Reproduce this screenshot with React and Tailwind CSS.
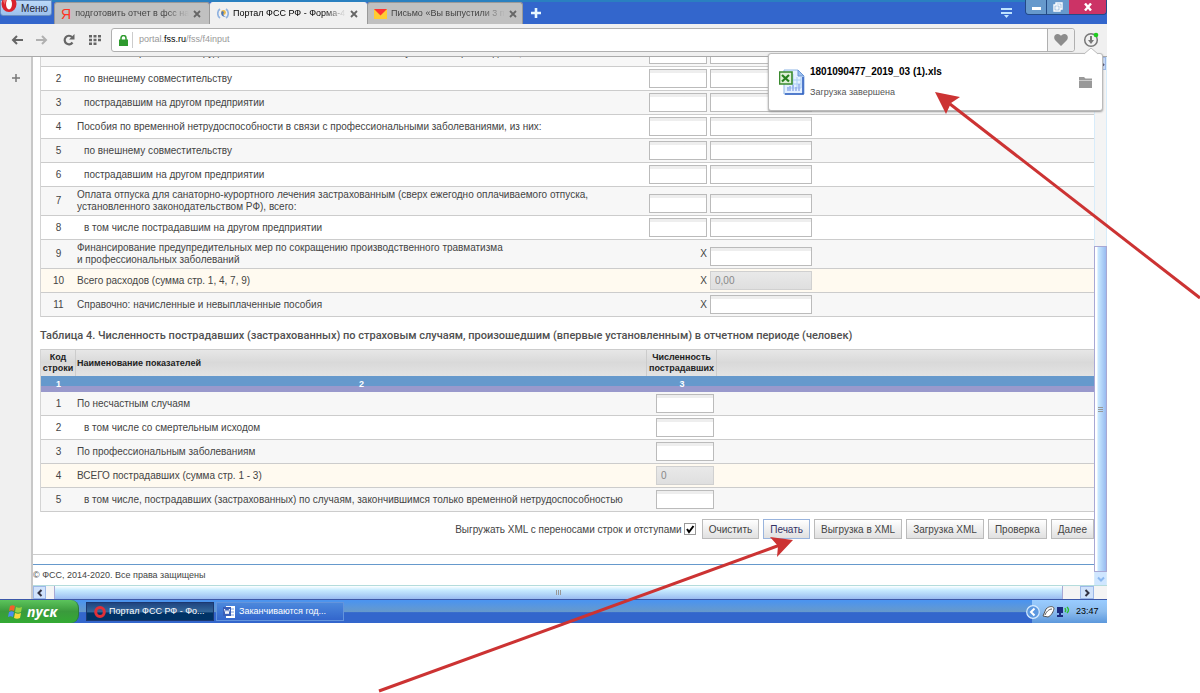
import { useState } from "react";

const paymentRows = [
  { code: "1", text: "Пособия по временной нетрудоспособности в связи с несчастными случаями на производстве, из них:", tall: true, days: true },
  { code: "2", text: "по внешнему совместительству", indent: true, days: true },
  { code: "3", text: "пострадавшим на другом предприятии", indent: true, days: true },
  { code: "4", text: "Пособия по временной нетрудоспособности в связи с профессиональными заболеваниями, из них:", days: true },
  { code: "5", text: "по внешнему совместительству", indent: true, days: true },
  { code: "6", text: "пострадавшим на другом предприятии", indent: true, days: true },
  { code: "7", text: "Оплата отпуска для санаторно-курортного лечения застрахованным (сверх ежегодно оплачиваемого отпуска,", second: "установленного законодательством РФ), всего:", tall: true, days: true },
  { code: "8", text: "в том числе пострадавшим на другом предприятии", indent: true, days: true },
  { code: "9", text: "Финансирование предупредительных мер по сокращению производственного травматизма", second: "и профессиональных заболеваний", tall: true },
  { code: "10", text: "Всего расходов (сумма стр. 1, 4, 7, 9)", total: "0,00" },
  { code: "11", text: "Справочно: начисленные и невыплаченные пособия" },
];

const injuredRows = [
  { code: "1", text: "По несчастным случаям" },
  { code: "2", text: "в том числе со смертельным исходом", indent: true },
  { code: "3", text: "По профессиональным заболеваниям" },
  { code: "4", text: "ВСЕГО пострадавших (сумма стр. 1 - 3)", total: "0" },
  { code: "5", text: "в том числе, пострадавших (застрахованных) по случаям, закончившимся только временной нетрудоспособностью", indent: true },
];

const actions = ["Очистить", "Печать", "Выгрузка в XML", "Загрузка XML", "Проверка", "Далее"];

function rowColor(row) {
  if (row.total) return "bg-[#fffaf0]";
  return Number(row.code) % 2 ? "bg-[#f7f7f7]" : "bg-white";
}

function Field({ label, total, wide }) {
  return (
    <input
      aria-label={label}
      defaultValue={total || ""}
      disabled={Boolean(total)}
      className={`block h-[19px] border px-1 text-[10px] ${wide ? "w-[102px]" : "w-[58px]"} ${
        total
          ? "border-[#d0d0d0] bg-linear-to-b from-[#e9e9e9] to-[#dfdfdf] text-[#888]"
          : "border-[#bbb] bg-linear-to-b from-[#eee] from-15% to-white to-20%"
      }`}
    />
  );
}

function OperaLogo({ className }) {
  return (
    <svg viewBox="0 0 16 16" className={className}>
      <ellipse cx="8" cy="8" rx="7.5" ry="8" fill="#d9232e" />
      <path d="M2 5C4 1 9 0 12 2L9 3C5 3 4 6 4 9Z" fill="#ef6a6a" />
      <ellipse cx="8" cy="8" rx="3" ry="5.4" fill="#fff" />
    </svg>
  );
}

function Tab({ icon, title, active }) {
  return (
    <div
      className={`flex h-[22px] items-center gap-1 rounded-t-[3px] border border-b-0 pr-2 pl-1.5 ${
        active ? "w-[157px] border-[#f0f0f0] bg-[#f0f0f0] text-black" : "w-[156px] border-[#999] bg-[#c0c0c0] text-[#444]"
      }`}
    >
      {icon}
      <button className="mask-r-from-80% flex-1 text-left text-[9px] whitespace-nowrap">
        {title}
      </button>
      <button aria-label="Закрыть вкладку">
        <svg viewBox="0 0 8 8" className="size-2" stroke="#666" strokeWidth="1.8">
          <path d="M1 1L7 7M7 1L1 7" />
        </svg>
      </button>
    </div>
  );
}

function TitleBar() {
  return (
    <header className="flex h-6 items-start border-t-2 border-[#2a80c0] bg-[#3366cc]">
      <button className="-mt-0.5 mr-0.5 flex h-[16px] w-[52px] items-center gap-1 rounded-b-[3px] border border-[#6a8fc0] bg-linear-to-b from-[#bcd8f8] to-[#9cc0ec] text-[#223]">
        <OperaLogo className="-mt-2 h-5 w-4 shrink-0" />
        Меню
      </button>
      <Tab
        title="подготовить отчет в фсс на"
        icon={<span className="w-3 text-center text-[14px] leading-4 text-[#f32]">Я</span>}
      />
      <Tab
        active
        title="Портал ФСС РФ - Форма-4"
        icon={
          <svg viewBox="0 0 12 12" className="size-3 shrink-0" fill="none">
            <path d="M3 1C0 3 0 8 3 10M9 1C12 3 12 8 9 10" stroke="#8fb2e0" strokeWidth="1.6" />
            <circle cx="6.5" cy="4.5" r="2.4" fill="#e8b84a" />
            <path d="M5 3C3 6 5 9 9 9C6 8 6 6 7 4Z" fill="#4a76b8" />
          </svg>
        }
      />
      <Tab
        title="Письмо «Вы выпустили 3 п"
        icon={
          <svg viewBox="0 0 13 10" className="h-2.5 w-[13px] shrink-0">
            <path d="M0 0H13V10H0Z" fill="#fc3" />
            <path d="M0 0H13L6.500 6.500Z" fill="#f33" />
          </svg>
        }
      />
      <button aria-label="Новая вкладка" className="ml-2 mt-1.5">
        <svg viewBox="0 0 10 10" className="size-2.5" stroke="#e8f8ff" strokeWidth="2.6">
          <path d="M5 0V10M0 5H10" />
        </svg>
      </button>
      <button aria-label="Меню вкладок" className="mt-1.5 mr-[13px] ml-auto">
        <svg viewBox="0 0 11 10" className="h-2.5 w-[11px]" fill="#bfe4ff">
          <path d="M0 0H11V2H0ZM0 4H11V6H0ZM3 7H8L5.500 10Z" />
        </svg>
      </button>
      <div className="-mt-0.5 flex h-[15px] overflow-hidden rounded-b-[4px] border border-t-0 border-[#234a86]">
        <button aria-label="Свернуть" className="flex w-[21px] items-end justify-center border-r border-[#234a86] bg-[#6699cc] pb-1">
          <span className="h-[3px] w-[9px] bg-white" />
        </button>
        <button aria-label="Развернуть" className="flex w-[22px] items-center justify-center bg-[#6699cc]">
          <svg viewBox="0 0 10 10" className="size-2.5" fill="none" stroke="#fff" strokeWidth="1.4">
            <path d="M3 3V1H9V7H7M1 3H7V9H1ZM3 5H5V7H3Z" />
          </svg>
        </button>
        <button aria-label="Закрыть" className="flex w-[37px] items-center justify-center bg-[#cc3366]">
          <svg viewBox="0 0 8 8" className="size-2" stroke="#fff" strokeWidth="2.4">
            <path d="M1 0.500L7 7.500M7 0.500L1 7.500" />
          </svg>
        </button>
      </div>
    </header>
  );
}

function DownloadPopup() {
  return (
    <div className="absolute top-[29px] right-1 z-10 flex h-[58px] w-[335px] items-center rounded-[3px] border border-[#bbb] bg-white pr-2.5 pl-2.5 shadow-[0_1px_2px_#999]">
      <svg viewBox="0 0 14 7" className="absolute -top-1.5 right-1 h-[7px] w-3.5">
        <path d="M0 6L7 0L14 6" fill="#fff" stroke="#bbb" />
        <path d="M1 7L7 1L13 7Z" fill="#fff" />
      </svg>
      <svg viewBox="0 0 26 26" className="size-[26px]">
        <path d="M5 1H19L25 7V25H5Z" fill="#e4f0ff" stroke="#8fb4e4" />
        <path d="M24 8V25H6" fill="none" stroke="#2f5fc0" strokeWidth="1.6" />
        <path d="M19 1V7H25Z" fill="#9cc0f0" stroke="#6a94d4" />
        <path d="M14 5V19M18 8V19M8 15H22M8 11H22M8 19H22M22 8V19" stroke="#a9cdf5" />
        <path d="M9 22V18M11 22V17M14 22V16M17 22V18M20 22V15" stroke="#8fa8e8" strokeWidth="1.4" />
        <path d="M0.500 3H13V15H0.500Z" fill="#dff0d8" stroke="#3a8a2e" strokeWidth="1.6" />
        <path d="M3 6L10 12.500M10 6L3 12.500" stroke="#26801e" strokeWidth="2.2" />
      </svg>
      <div className="ml-[5px] flex-1">
        <p className="leading-4 font-bold text-black">1801090477_2019_03 (1).xls</p>
        <p className="mt-1 text-[9px] leading-4 text-[#555]">Загрузка завершена</p>
      </div>
      <button aria-label="Показать в папке">
        <svg viewBox="0 0 13 11" className="h-[11px] w-[13px]" fill="#999">
          <path d="M0 0H5L6.500 1.500H13V3H0ZM0 3.500H13V11H0Z" />
        </svg>
      </button>
    </div>
  );
}

function Toolbar() {
  return (
    <nav className="relative flex h-[33px] items-center border-b border-[#aaa] bg-[#f0f0f0] pl-[11px]">
      <button aria-label="Назад">
        <svg viewBox="0 0 12 10" className="h-2.5 w-3" fill="none" stroke="#666" strokeWidth="2">
          <path d="M12 5H2M6 1L2 5L6 9" />
        </svg>
      </button>
      <button aria-label="Вперёд" className="ml-[13px]">
        <svg viewBox="0 0 12 10" className="h-2.5 w-3" fill="none" stroke="#b0b0b0" strokeWidth="2">
          <path d="M0 5H10M6 1L10 5L6 9" />
        </svg>
      </button>
      <button aria-label="Обновить" className="ml-[15px]">
        <svg viewBox="0 0 12 12" className="size-3" fill="none">
          <path d="M9.500 8.500A4.300 4.300 0 1 1 9 3" stroke="#666" strokeWidth="2.200" />
          <path d="M11.500 0V5.500H6Z" fill="#666" />
        </svg>
      </button>
      <button aria-label="Экспресс-панель" className="ml-3.5">
        <svg viewBox="0 0 12 10" className="h-2.5 w-3" fill="#666">
          <path d="M0 0H3V2.500H0ZM4.500 0H7.500V2.500H4.500ZM9 0H12V2.500H9ZM0 3.700H3V6.200H0ZM4.500 3.700H7.500V6.200H4.500ZM9 3.700H12V6.200H9ZM0 7.400H3V10H0ZM4.500 7.400H7.500V10H4.500Z" />
        </svg>
      </button>
      <div className="ml-2.5 flex h-6 flex-1 items-center rounded-[3px] border border-[#b0b0b0] bg-white pl-[7px]">
        <svg viewBox="0 0 9 11" className="h-[11px] w-[9px]">
          <path d="M2 5V3A2.500 2.500 0 0 1 7 3V5" fill="none" stroke="#2e9a2e" strokeWidth="1.500" />
          <path d="M0 4.500H9V11H0Z" fill="#2e9a2e" />
        </svg>
        <span className="ml-1 h-4 w-px bg-[#ccc]" />
        <div role="textbox" aria-label="Адрес" className="ml-1.5 flex-1 text-[9px] text-[#999]">
          portal.<span className="text-black">fss.ru</span>/fss/f4input
        </div>
        <button aria-label="В закладки" className="flex h-full w-[27px] items-center justify-center rounded-r-[3px] border-l border-[#b0b0b0] bg-[#f0f0f0]">
          <svg viewBox="0 0 14 12" className="h-3 w-3.5" fill="#8c8c8c">
            <path d="M7 12L1 6C-1 3 1 0 3.500 0C5.500 0 6.500 1 7 2C7.500 1 8.500 0 10.500 0C13 0 15 3 13 6Z" />
          </svg>
        </button>
      </div>
      <button aria-label="Загрузки" className="mr-2 ml-2">
        <svg viewBox="0 0 16 16" className="size-4" fill="none">
          <circle cx="8" cy="8" r="6.300" stroke="#777" strokeWidth="1.500" />
          <path d="M8 4V9" stroke="#777" strokeWidth="2" />
          <path d="M5 8H11L8 12Z" fill="#777" />
          <circle cx="13" cy="3" r="2.300" fill="#1fcc1f" />
        </svg>
      </button>
      <DownloadPopup />
    </nav>
  );
}

function PaymentsTable() {
  return (
    <table className="-mt-[19px] w-full table-fixed border-separate border-spacing-0 border-l border-[#d4d4d4] leading-3">
      <colgroup>
        <col className="w-[35px]" />
        <col className="w-[571px]" />
        <col className="w-[62px]" />
        <col />
      </colgroup>
      <tbody>
        {paymentRows.map((row) => (
          <tr key={row.code} className={`${row.tall ? "h-[29px]" : "h-6"} ${rowColor(row)}`}>
            <td className="border-b border-[#ccc] p-0 text-center">{row.code}</td>
            <td
              className={`border-b border-[#ccc] p-0 whitespace-nowrap ${row.indent ? "pl-2" : "pl-px"} ${
                row.tall && !row.second ? "pt-0.5" : ""
              }`}
            >
              {row.text}
              {row.second && <br />}
              {row.second}
            </td>
            {row.days ? (
              <td className="border-b border-[#ccc] p-0 pb-0.5 pl-0.5 align-bottom">
                <Field label={`Строка ${row.code}, дни`} />
              </td>
            ) : (
              <td className="border-b border-[#ccc] p-0 pr-0.5 text-right">X</td>
            )}
            <td className="border-b border-[#ccc] p-0 pb-0.5 pl-px align-bottom">
              <Field wide label={`Строка ${row.code}, сумма`} total={row.total} />
            </td>
          </tr>
        ))}
      </tbody>
    </table>
  );
}

function InjuredTable() {
  return (
    <table className="w-full table-fixed border-separate border-spacing-0 border-l border-[#d4d4d4] leading-3">
      <colgroup>
        <col className="w-[35px]" />
        <col className="w-[571px]" />
        <col className="w-[70px]" />
        <col />
      </colgroup>
      <thead className="text-[9px] font-bold">
        <tr className="h-[27px] bg-linear-to-b from-[#e8e8e8] via-[#d9d9d9] to-[#e3e3e3] leading-[11px] text-[#222]">
          <th className="border-t border-r border-[#ccc] p-0">
            Код
            <br />
            строки
          </th>
          <th className="border-t border-r border-[#ccc] p-0 pl-px text-left">Наименование показателей</th>
          <th className="border-t border-r border-[#ccc] p-0">
            Численность
            <br />
            пострадавших
          </th>
          <th className="border-t border-[#ccc] p-0" />
        </tr>
        <tr className="h-4 bg-linear-to-b from-[#6699cc] from-65% to-[#9999cc] to-65% text-white">
          <th className="p-0">1</th>
          <th className="p-0">2</th>
          <th className="p-0">3</th>
          <th className="p-0" />
        </tr>
      </thead>
      <tbody>
        {injuredRows.map((row) => (
          <tr key={row.code} className={`h-6 ${rowColor(row)}`}>
            <td className="border-b border-[#ccc] p-0 text-center">{row.code}</td>
            <td className={`border-b border-[#ccc] p-0 whitespace-nowrap ${row.indent ? "pl-2" : "pl-px"}`}>{row.text}</td>
            <td className="border-b border-[#ccc] p-0 pb-0.5 pl-[9px] align-bottom">
              <Field label={`Численность, строка ${row.code}`} total={row.total} />
            </td>
            <td className="border-b border-[#ccc] p-0" />
          </tr>
        ))}
      </tbody>
    </table>
  );
}

function Chevron({ className, color }) {
  return (
    <svg viewBox="0 0 8 8" className={`size-2 ${className || ""}`} fill="none" stroke={color} strokeWidth="2">
      <path d="M5.500 1L2.500 4L5.500 7" />
    </svg>
  );
}

function VerticalScrollbar() {
  return (
    <div className="flex w-[13px] shrink-0 flex-col border-x border-[#d8ecfa] bg-[#f4f4f4]">
      <button aria-label="Вверх" className="flex h-[13px] items-center justify-center border border-[#9cb8e8] bg-[#c8dcfa]">
        <Chevron className="rotate-90" color="#446" />
      </button>
      <div className="h-44" />
      <div className="-mx-px flex flex-1 flex-col items-center justify-center gap-px border border-[#a8a8d4] bg-linear-to-r from-white from-15% via-[#c8e8ff] via-30% to-[#99bbf0]">
        <span className="h-px w-[5px] bg-[#999]" />
        <span className="h-px w-[5px] bg-[#999]" />
        <span className="h-px w-[5px] bg-[#999]" />
      </div>
      <button aria-label="Вниз" className="flex h-[13px] items-center justify-center bg-[#cfe6ff]">
        <Chevron className="-rotate-90" color="#8ab8f0" />
      </button>
    </div>
  );
}

function HorizontalScrollbar() {
  return (
    <div className="flex h-3.5 border-t border-[#b4dcdc] bg-[#f4f4f4] pr-[13px]">
      <button aria-label="Влево" className="flex w-[13px] items-center justify-center border border-[#9cb8e8] bg-[#d0e2fb]">
        <Chevron color="#334" />
      </button>
      <div className="w-2" />
      <div className="flex flex-1 items-center justify-center gap-px border-x border-[#a8a8d4] bg-linear-to-b from-white via-[#c8ecff] via-30% to-[#99bbf0]">
        <span className="h-[5px] w-px bg-[#999]" />
        <span className="h-[5px] w-px bg-[#999]" />
        <span className="h-[5px] w-px bg-[#999]" />
      </div>
      <div className="w-[17px]" />
      <button aria-label="Вправо" className="flex w-3.5 items-center justify-center border border-[#9cb8e8] bg-[#d0e2fb]">
        <Chevron className="rotate-180" color="#334" />
      </button>
    </div>
  );
}

function Taskbar() {
  return (
    <footer className="flex h-6 items-stretch border-t border-[#3c58a8] bg-linear-to-b from-[#4c94ee] from-5% via-[#6699cc] via-50% to-[#3366cc] to-55% text-white">
      <button className="flex w-[79px] items-center gap-1 rounded-r-lg border-r border-[#2c7a3c] bg-linear-to-b from-[#5cc45c] via-[#3a9a3c] to-[#33aa33] pl-2 font-['Open_Sans',sans-serif] text-[14px] leading-5 font-bold italic">
        <svg viewBox="0 0 15 14" className="h-3.5 w-[15px]">
          <path d="M2 1C4 0 5 0 7 1L6 6C4 5 3 5 1 6Z" fill="#f0602c" />
          <path d="M8 2C10 3 12 3 14 2L13 7C11 8 9 8 7 7Z" fill="#9ad440" />
          <path d="M1 7C3 6 4 6 6 7L5 12C3 11 2 11 0 12Z" fill="#4c8cf0" />
          <path d="M7 8C9 9 11 9 13 8L12 13C10 14 8 14 6 13Z" fill="#fcd83c" />
        </svg>
        пуск
      </button>
      <button className="mt-0.5 mb-0.5 ml-[7px] flex w-32 items-center gap-[3px] border border-[#1c3870] bg-linear-to-b from-[#1f4480] via-[#336699] via-50% to-[#003366] to-60% pl-[7px] text-[9px] whitespace-nowrap">
        <svg viewBox="0 0 12 12" className="size-3" fill="none">
          <ellipse cx="6" cy="6" rx="4.300" ry="4.500" stroke="#e03038" strokeWidth="3" />
        </svg>
        Портал ФСС РФ - Фо...
      </button>
      <button className="mt-0.5 mb-0.5 ml-0.5 flex w-32 items-center gap-1 border border-[#6494dc] bg-linear-to-b from-[#4c88dc] to-[#3366cc] pl-1.5 text-[9px] whitespace-nowrap">
        <svg viewBox="0 0 12 12" className="size-3">
          <path d="M3 0H12V12H3Z" fill="#fff" />
          <path d="M5 3H11M5 6H11M5 9H11" stroke="#7aa0e0" />
          <path d="M0 1H8V10H0Z" fill="#3a5fb8" />
          <path d="M1.500 3L3 8L4 4.500L5 8L6.500 3" fill="none" stroke="#fff" />
        </svg>
        Заканчиваются год...
      </button>
      <div className="ml-auto flex w-[75px] items-center gap-0.5 bg-linear-to-b from-[#99ccff] via-[#8cbcee] to-[#5c98dc] text-[9px] text-black">
        <svg viewBox="0 0 14 14" className="-ml-1.5 size-3.5">
          <circle cx="7" cy="7" r="6.300" fill="#5c98e0" stroke="#d8ecff" strokeWidth="1.200" />
          <path d="M8.500 3.500L5 7L8.500 10.500" fill="none" stroke="#fff" strokeWidth="2" />
        </svg>
        <svg viewBox="0 0 13 12" className="h-3 w-[13px]" stroke="#555">
          <path d="M1 10L4 3C7 0 11 0 12 2C12 5 9 10 6 11Z" fill="#fff" />
          <path d="M3 9C4 6 7 3 10 3" fill="none" />
        </svg>
        <svg viewBox="0 0 13 12" className="h-3 w-[13px]" fill="none">
          <path d="M0 1H6V7H0ZM2 7H4V9H6V11H0V9H2Z" fill="#1c2c80" />
          <path d="M8 2C9 4 9 5 8 6M10 1C12 3 12 5 10 7" stroke="#2bbf2b" strokeWidth="1.400" />
        </svg>
        <span className="ml-1">23:47</span>
      </div>
    </footer>
  );
}

function App() {
  const [indentXml, setIndentXml] = useState(true);

  return (
    <div className="relative min-h-screen overflow-hidden bg-white pr-[93px] font-['Liberation_Sans',Arial,sans-serif] text-[10px] text-[#444]">
      <TitleBar />
      <Toolbar />

      <div className="flex">
        <aside className="w-[33px] shrink-0 border-r-2 border-[#c8c8c8] bg-[#f0f0f0] pt-[17px] pl-3">
          <button aria-label="Добавить панель" className="block">
            <svg viewBox="0 0 8 8" className="size-2" stroke="#777" strokeWidth="1.500">
              <path d="M4 0V8M0 4H8" />
            </svg>
          </button>
        </aside>

        <div className="min-w-0 flex-1">
          <div className="flex">
            <main className="min-w-0 flex-1 overflow-hidden">
              <div className="pl-[7px]">
                <PaymentsTable />
                <h2 className="pt-[11px] pb-[5px] font-[Roboto,sans-serif] text-[11px] leading-4 font-medium whitespace-nowrap text-[#505050]">
                  Таблица 4. Численность пострадавших (застрахованных) по страховым случаям, произошедшим (впервые установленным) в отчетном периоде (человек)
                </h2>
                <InjuredTable />
                <div className="mt-[7px] flex items-center justify-end gap-1">
                  <label htmlFor="indent" className="whitespace-nowrap">
                    Выгружать XML с переносами строк и отступами
                  </label>
                  <span className="relative mr-0.5 -ml-0.5">
                    <input
                      id="indent"
                      type="checkbox"
                      checked={indentXml}
                      onChange={(e) => setIndentXml(e.target.checked)}
                      className="block size-3 appearance-none border border-[#999] bg-white"
                    />
                    {indentXml && (
                      <svg viewBox="0 0 12 12" className="pointer-events-none absolute inset-0 size-3" fill="none" stroke="#000" strokeWidth="2">
                        <path d="M3 6L5 9L9.500 3" />
                      </svg>
                    )}
                  </span>
                  {actions.map((name) => (
                    <button
                      key={name}
                      className={`h-5 border bg-linear-to-b from-white to-[#e0e0e0] px-1.5 whitespace-nowrap ${
                        name === "Печать" ? "border-[#99b4dd] text-[#336]" : "border-[#bbb]"
                      }`}
                    >
                      {name}
                    </button>
                  ))}
                </div>
              </div>
              <div className="mt-[15px] h-2.5 border-t border-[#ccc]" />
              <p className="h-[21px] border-t border-[#6699cc] text-[9px] leading-5">© ФСС, 2014-2020. Все права защищены</p>
            </main>
            <VerticalScrollbar />
          </div>
          <HorizontalScrollbar />
        </div>
      </div>

      <Taskbar />

      {/* pointers to the download and the print button */}
      <svg viewBox="0 0 1200 693" className="pointer-events-none absolute top-0 left-0 z-20 h-[693px] w-[1200px]" fill="#cc3333">
        <path d="M950 104L1200 298" stroke="#cc3333" strokeWidth="3" />
        <path d="M935 92L960 97L951 103L946 114Z" />
        <path d="M379 691L780 545" stroke="#cc3333" strokeWidth="3" />
        <path d="M793 540L770 537L778 546L777 557Z" />
      </svg>
    </div>
  );
}

export default App;
